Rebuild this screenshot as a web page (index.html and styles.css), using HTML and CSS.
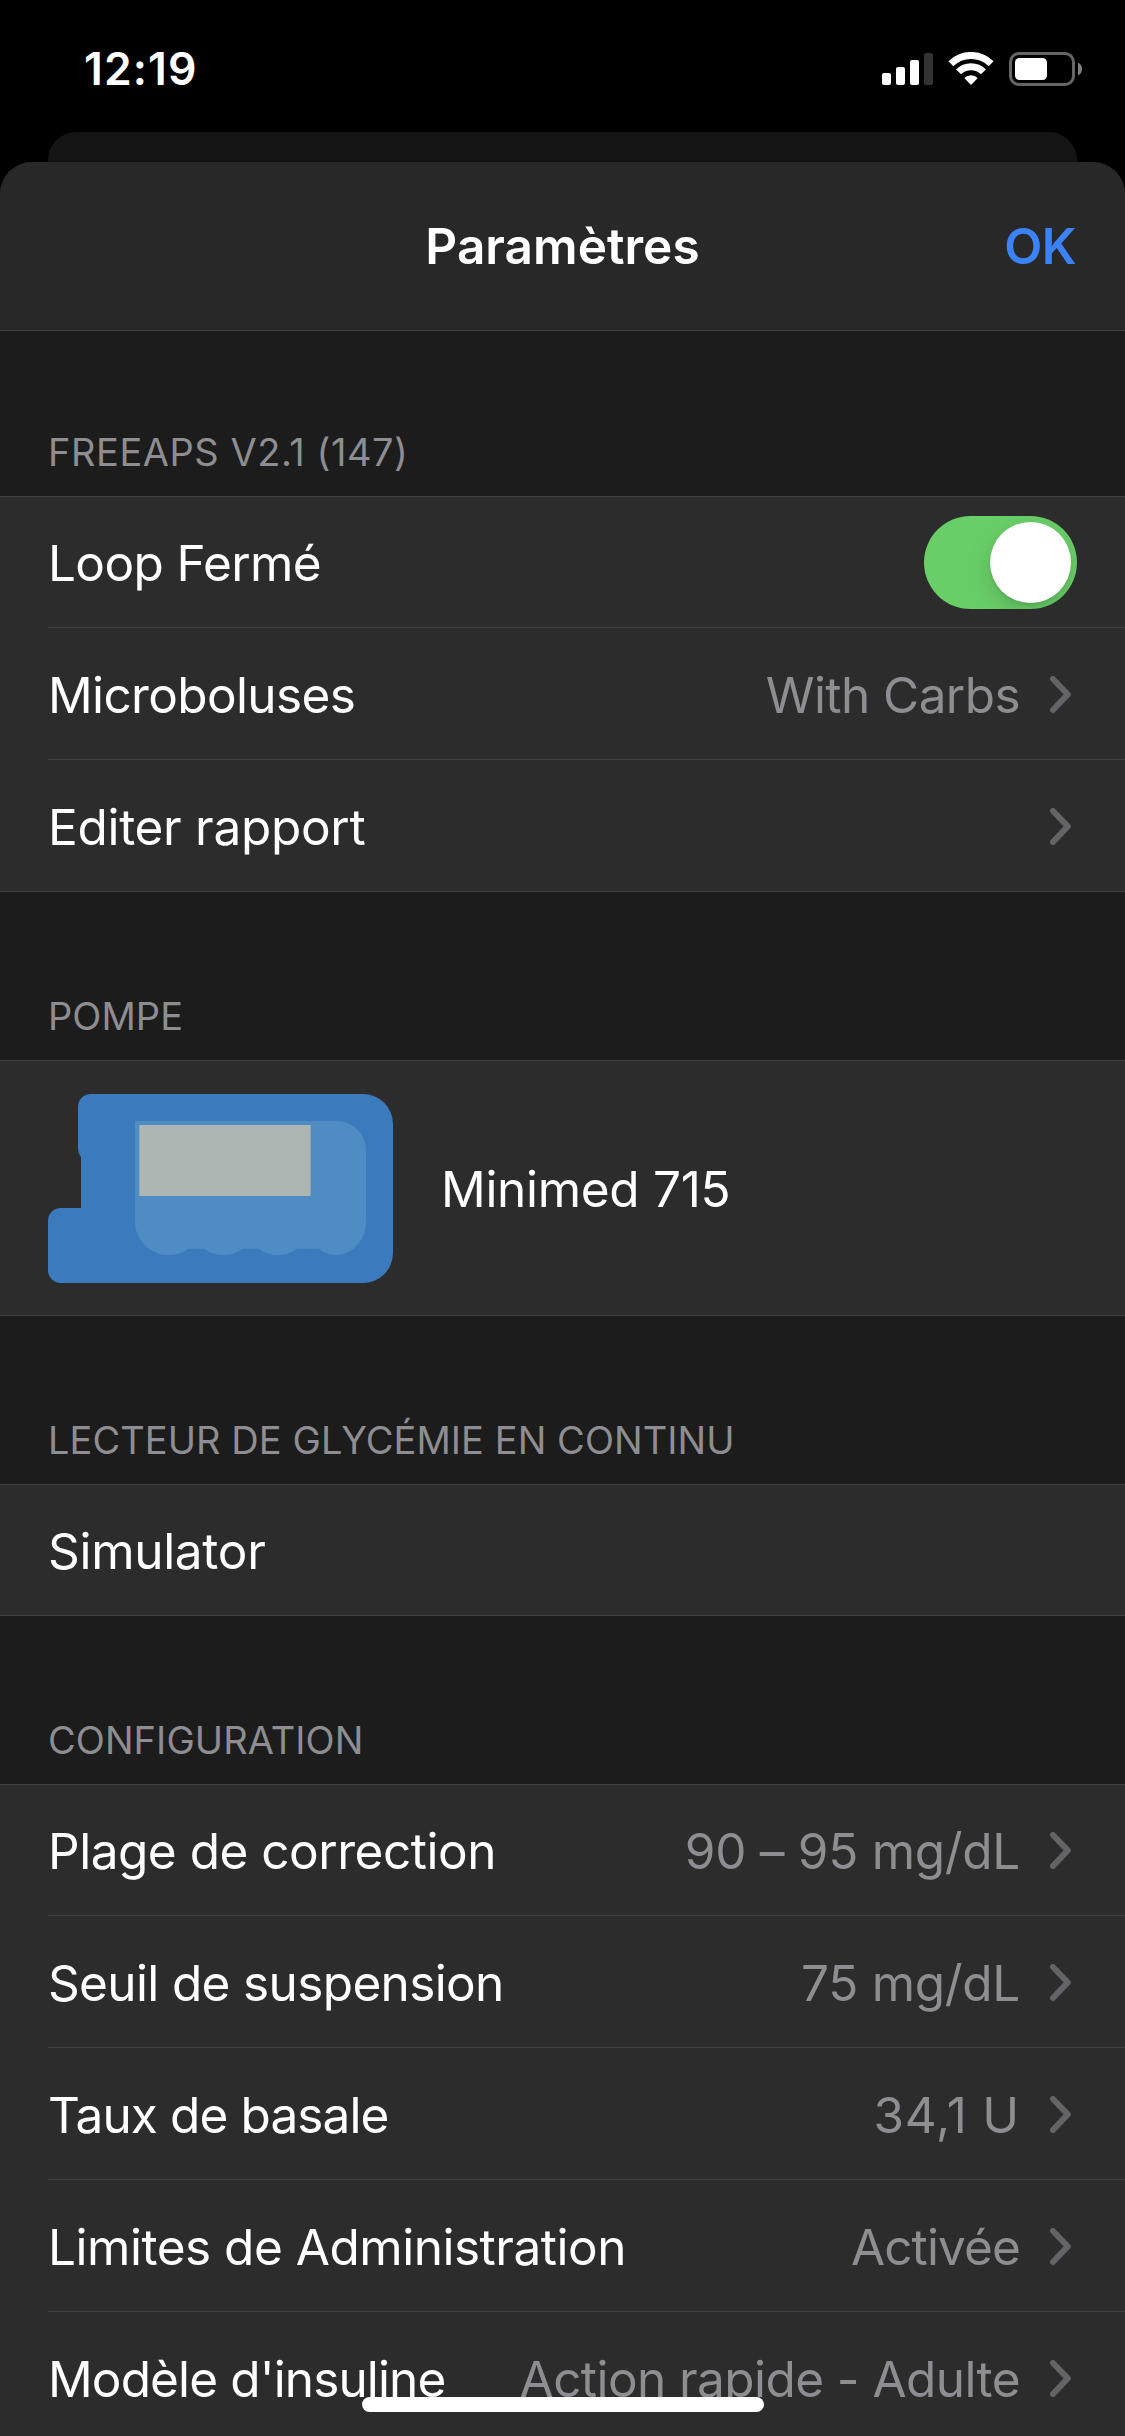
FILE: index.html
```html
<!DOCTYPE html>
<html lang="fr">
<head>
<meta charset="utf-8">
<title>Paramètres</title>
<link rel="stylesheet" href="styles.css">
</head>
<body>
<svg width="0" height="0" class="defs">
  <symbol id="chevron" viewBox="0 0 21 37"><path d="M3 3 L17.8 18.4 L3 34" fill="none" stroke="#636368" stroke-width="6" stroke-linecap="round" stroke-linejoin="round"/></symbol>
</svg>
<header class="status">
  <span class="time">12:19</span>
  <div class="indicators">
    <svg class="signal" width="51" height="32" viewBox="0 0 51 32" fill="#fff">
      <rect x="0" y="20" width="9" height="12" rx="2"/>
      <rect x="14" y="14" width="9" height="18" rx="2"/>
      <rect x="28" y="7" width="9" height="25" rx="2"/>
      <rect x="42" y="0" width="9" height="32" rx="2" fill="#333"/>
    </svg>
    <svg class="wifi" width="46" height="33" viewBox="0 0 46 33" fill="none" stroke="#fff">
      <path d="M2.9 11.7 A28.6 28.6 0 0 1 43.1 11.7" stroke-width="7"/>
      <path d="M10.6 19.9 A17.3 17.3 0 0 1 35.4 19.9" stroke-width="7"/>
      <path d="M16.3 26 A9.4 9.4 0 0 1 29.7 26 L23.8 32.3 Q23 33 22.2 32.3 Z" fill="#fff" stroke="none"/>
    </svg>
    <svg class="battery" width="73" height="34" viewBox="0 0 73 34">
      <rect x="1.5" y="1.5" width="63" height="31" rx="8.5" fill="none" stroke="#666" stroke-width="3"/>
      <rect x="6" y="6" width="32" height="22" rx="4.5" fill="#fff"/>
      <path d="M69 10.5 Q73 12.5 73 17 Q73 21.5 69 23.5 Z" fill="#808080"/>
    </svg>
  </div>
</header>
<div class="behind"></div>
<main class="sheet">
  <nav class="nav">
    <h1 class="title">Paramètres</h1>
    <span class="done">OK</span>
  </nav>

  <h2 class="section first">FREEAPS V2.1 (147)</h2>
  <ul class="group">
    <li class="row"><span class="label">Loop Fermé</span><span class="switch"><span class="thumb"></span></span></li>
    <li class="row"><span class="label">Microboluses</span><span class="value">With Carbs</span><svg class="chevron"><use href="#chevron"/></svg></li>
    <li class="row"><span class="label loose">Editer rapport</span><svg class="chevron"><use href="#chevron"/></svg></li>
  </ul>

  <h2 class="section">POMPE</h2>
  <ul class="group">
    <li class="row pump">
      <svg class="device" width="345" height="189" viewBox="144 342 1035 567">
        <path fill="#3b7abc" d="M272 342H1089A90 90 0 0 1 1179 432V819A90 90 0 0 1 1089 909H182A38 38 0 0 1 144 871V722A38 38 0 0 1 182 684H243V532Q234 521 234 506V380A38 38 0 0 1 272 342Z"/>
        <path fill="#4f8cc3" d="M405 423H1010A88 88 0 0 1 1098 511V728C1098 780 1056 825 1008 825Q980 825 956 806H892Q866 825 834 825Q802 825 777 806H728Q702 825 670 825Q638 825 613 806H565Q540 825 505 825C452 825 405 780 405 725Z"/>
        <path fill="#aeb6b3" d="M418 435H932V648H418Z"/>
      </svg>
      <span class="label loose">Minimed 715</span>
    </li>
  </ul>

  <h2 class="section">LECTEUR DE GLYCÉMIE EN CONTINU</h2>
  <ul class="group">
    <li class="row"><span class="label loose">Simulator</span></li>
  </ul>

  <h2 class="section">CONFIGURATION</h2>
  <ul class="group">
    <li class="row"><span class="label medium">Plage de correction</span><span class="value loose">90 – 95 mg/dL</span><svg class="chevron"><use href="#chevron"/></svg></li>
    <li class="row"><span class="label">Seuil de suspension</span><span class="value loose">75 mg/dL</span><svg class="chevron"><use href="#chevron"/></svg></li>
    <li class="row"><span class="label tight">Taux de basale</span><span class="value wide">34,1 U</span><svg class="chevron"><use href="#chevron"/></svg></li>
    <li class="row"><span class="label medium">Limites de Administration</span><span class="value tight">Activée</span><svg class="chevron"><use href="#chevron"/></svg></li>
    <li class="row"><span class="label tight">Modèle d'insuline</span><span class="value">Action rapide - Adulte</span><svg class="chevron"><use href="#chevron"/></svg></li>
  </ul>
</main>
<div class="home-indicator"></div>
</body>
</html>
```
FILE: styles.css
```css
* { box-sizing: border-box; }

body {
  position: relative;
  width: 1125px;
  height: 2436px;
  margin: 0;
  overflow: hidden;
  background: #000;
  color: #fff;
  font-family: Inter, "Liberation Sans", sans-serif;
  font-size: 49.5px;
}

.defs { position: absolute; }

/* Status bar */
.status {
  display: flex;
  justify-content: space-between;
  height: 132px;
  padding: 39px 43px 0 84px;
}

.time {
  font-size: 44.5px;
  font-weight: 600;
  line-height: 60px;
  letter-spacing: 1.1px;
}

.indicators {
  display: flex;
  align-items: flex-start;
  padding-top: 13px;
}

.signal { margin-top: 1px; margin-right: 15px; }
.wifi { margin-right: 15px; }

/* Stacked sheets */
.behind {
  height: 30px;
  margin: 0 48px;
  border-radius: 28px 28px 0 0;
  background: #141414;
}

.sheet {
  height: 2274px;
  overflow: hidden;
  border-radius: 32px 32px 0 0;
  background: #1c1c1c;
}

.nav {
  display: grid;
  grid-template-columns: 1fr auto 1fr;
  align-items: center;
  height: 169px;
  padding: 0 49px 0 48px;
  border-bottom: 1px solid #404042;
  background: #282828;
}

.title {
  grid-column: 2;
  margin: 0 0 0 1px;
  font-size: 49.5px;
  font-weight: 600;
  letter-spacing: 0.04px;
}

.done {
  justify-self: end;
  color: #3b82f7;
  font-weight: 600;
  letter-spacing: -0.5px;
}

/* Grouped table */
.section {
  display: flex;
  align-items: flex-end;
  height: 168px;
  margin: 0;
  padding: 0 48px 22px;
  color: #8d8d92;
  font-size: 38px;
  font-weight: 400;
  line-height: 44px;
  letter-spacing: 0.06px;
}

.section.first {
  height: 165px;
  letter-spacing: 0.55px;
}

.group {
  margin: 0;
  padding: 0;
  list-style: none;
  background: #2c2c2c;
  box-shadow: inset 0 1px #424244;
}

.row {
  display: flex;
  align-items: center;
  height: 132px;
  margin-left: 48px;
  padding: 1px 54px 0 0;
  border-bottom: 1px solid #424244;
}

.row:last-child {
  margin-left: 0;
  padding-left: 48px;
}

.label,
.value {
  line-height: 60px;
  padding-top: 2px;
  letter-spacing: -0.64px;
  white-space: nowrap;
}

.value {
  color: #8d8d92;
  margin-left: auto;
  letter-spacing: -0.57px;
}

.medium { letter-spacing: -0.48px; }
.loose { letter-spacing: -0.3px; }
.tight { letter-spacing: -0.87px; }
.wide { letter-spacing: 0.8px; }

.chevron {
  flex: none;
  width: 21px;
  height: 37px;
  margin-left: 30px;
}

.label + .chevron { margin-left: auto; }

.switch {
  display: flex;
  justify-content: flex-end;
  width: 153px;
  height: 93px;
  margin: 1px -6px 0 auto;
  padding: 6px;
  overflow: hidden;
  border-radius: 47px;
  background: #69ce68;
}

.thumb {
  width: 81px;
  height: 81px;
  border-radius: 50%;
  background: #fff;
  box-shadow: 0 9px 24px rgba(0, 0, 0, 0.15), 0 3px 3px rgba(0, 0, 0, 0.06);
}

.pump {
  gap: 48px;
  height: 256px;
}

.home-indicator {
  position: absolute;
  bottom: 24px;
  left: 362px;
  width: 402px;
  height: 15px;
  border-radius: 8px;
  background: #fff;
}
```
